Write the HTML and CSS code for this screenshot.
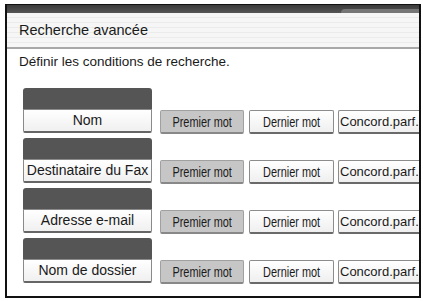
FILE: index.html
```
<!DOCTYPE html>
<html lang="fr">
<head>
<meta charset="utf-8">
<link rel="stylesheet" href="styles.css">
</head>
<body>
<div class="frame">
  <div class="topbar"><div class="tab"></div></div>
  <div class="title">Recherche avancée</div>
  <div class="content">
    <div class="intro">Définir les conditions de recherche.</div>
    <div class="rows">
      <div class="row">
        <div class="field"><div class="dark"></div><div class="name">Nom</div></div>
        <div class="btn sel b1"><span class="narrow">Premier mot</span></div>
        <div class="btn b2"><span class="narrow">Dernier mot</span></div>
        <div class="btn b3">Concord.parf.</div>
      </div>
      <div class="row">
        <div class="field"><div class="dark"></div><div class="name">Destinataire du Fax</div></div>
        <div class="btn sel b1"><span class="narrow">Premier mot</span></div>
        <div class="btn b2"><span class="narrow">Dernier mot</span></div>
        <div class="btn b3">Concord.parf.</div>
      </div>
      <div class="row">
        <div class="field"><div class="dark"></div><div class="name">Adresse e-mail</div></div>
        <div class="btn sel b1"><span class="narrow">Premier mot</span></div>
        <div class="btn b2"><span class="narrow">Dernier mot</span></div>
        <div class="btn b3">Concord.parf.</div>
      </div>
      <div class="row">
        <div class="field"><div class="dark"></div><div class="name">Nom de dossier</div></div>
        <div class="btn sel b1"><span class="narrow">Premier mot</span></div>
        <div class="btn b2"><span class="narrow">Dernier mot</span></div>
        <div class="btn b3">Concord.parf.</div>
      </div>
    </div>
  </div>
</div>
</body>
</html>
```
FILE: styles.css
```
* { box-sizing: border-box; }
html, body { margin: 0; padding: 0; background: #fff; }
body {
  width: 423px; height: 301px; overflow: hidden;
  font-family: "Liberation Sans", Arial, sans-serif;
  font-size: 13px; color: #1a1a1a;
}
.frame {
  margin: 4px 0 0 5px;
  width: 416px; height: 294px;
  border: 2px solid #111;
  border-top: 1px solid #111;
  display: flex; flex-direction: column;
  overflow: hidden;
}
.topbar {
  height: 8px; flex: none;
  background: linear-gradient(#3a3a3a, #555);
  display: flex; justify-content: flex-end; align-items: flex-end;
}
.tab {
  width: 78px; height: 4px;
  background: #767676;
  border-top-left-radius: 4px;
}
.title {
  height: 36px; flex: none;
  padding: 0 0 0 12px;
  display: flex; align-items: center;
  background: repeating-linear-gradient(#f6f6f6 0, #f6f6f6 4px, #ebebeb 4px, #ebebeb 5px);
  border-bottom: 2px solid #a8a8a8;
  font-size: 14.5px;
}
.content {
  flex: 1;
  padding: 5px 0 0 16px;
  overflow: hidden;
}
.intro { height: 16px; line-height: 16px; margin-left: -4px; font-size: 13.5px; }
.rows {
  margin-top: 18px;
  display: flex; flex-direction: column; gap: 5px;
}
.row { display: flex; align-items: flex-end; white-space: nowrap; }
.field { width: 129px; flex: none; display: flex; flex-direction: column; }
.dark {
  height: 21px;
  background: #555;
  border-radius: 3px 3px 0 0;
}
.name {
  height: 24px;
  background: linear-gradient(#ffffff, #f0f0f0);
  border: 1px solid #8a8a8a;
  border-bottom: 2px solid #666;
  border-radius: 0 0 2px 2px;
  text-align: center; line-height: 21px;
  font-size: 14px;
}
.btn {
  height: 24px; flex: none;
  border: 1px solid #8c8c8c;
  border-bottom: 2px solid #6a6a6a;
  border-radius: 2px;
  background: linear-gradient(#ffffff, #efefef);
  display: flex; align-items: center; justify-content: center;
  margin-bottom: -1px;
}
.sel { background: #c6c6c6; border-color: #a0a0a0; border-bottom-color: #888; }
.b1 { width: 84px; margin-left: 8px; }
.b2 { width: 85px; margin-left: 5px; }
.b3 { width: 81px; margin-left: 4px; justify-content: flex-start; padding-left: 1px; font-size: 13px; border-right: none; border-radius: 2px 0 0 2px; }
.narrow {
  display: inline-block;
  font-size: 14px;
  transform: scaleX(0.78);
}
```
